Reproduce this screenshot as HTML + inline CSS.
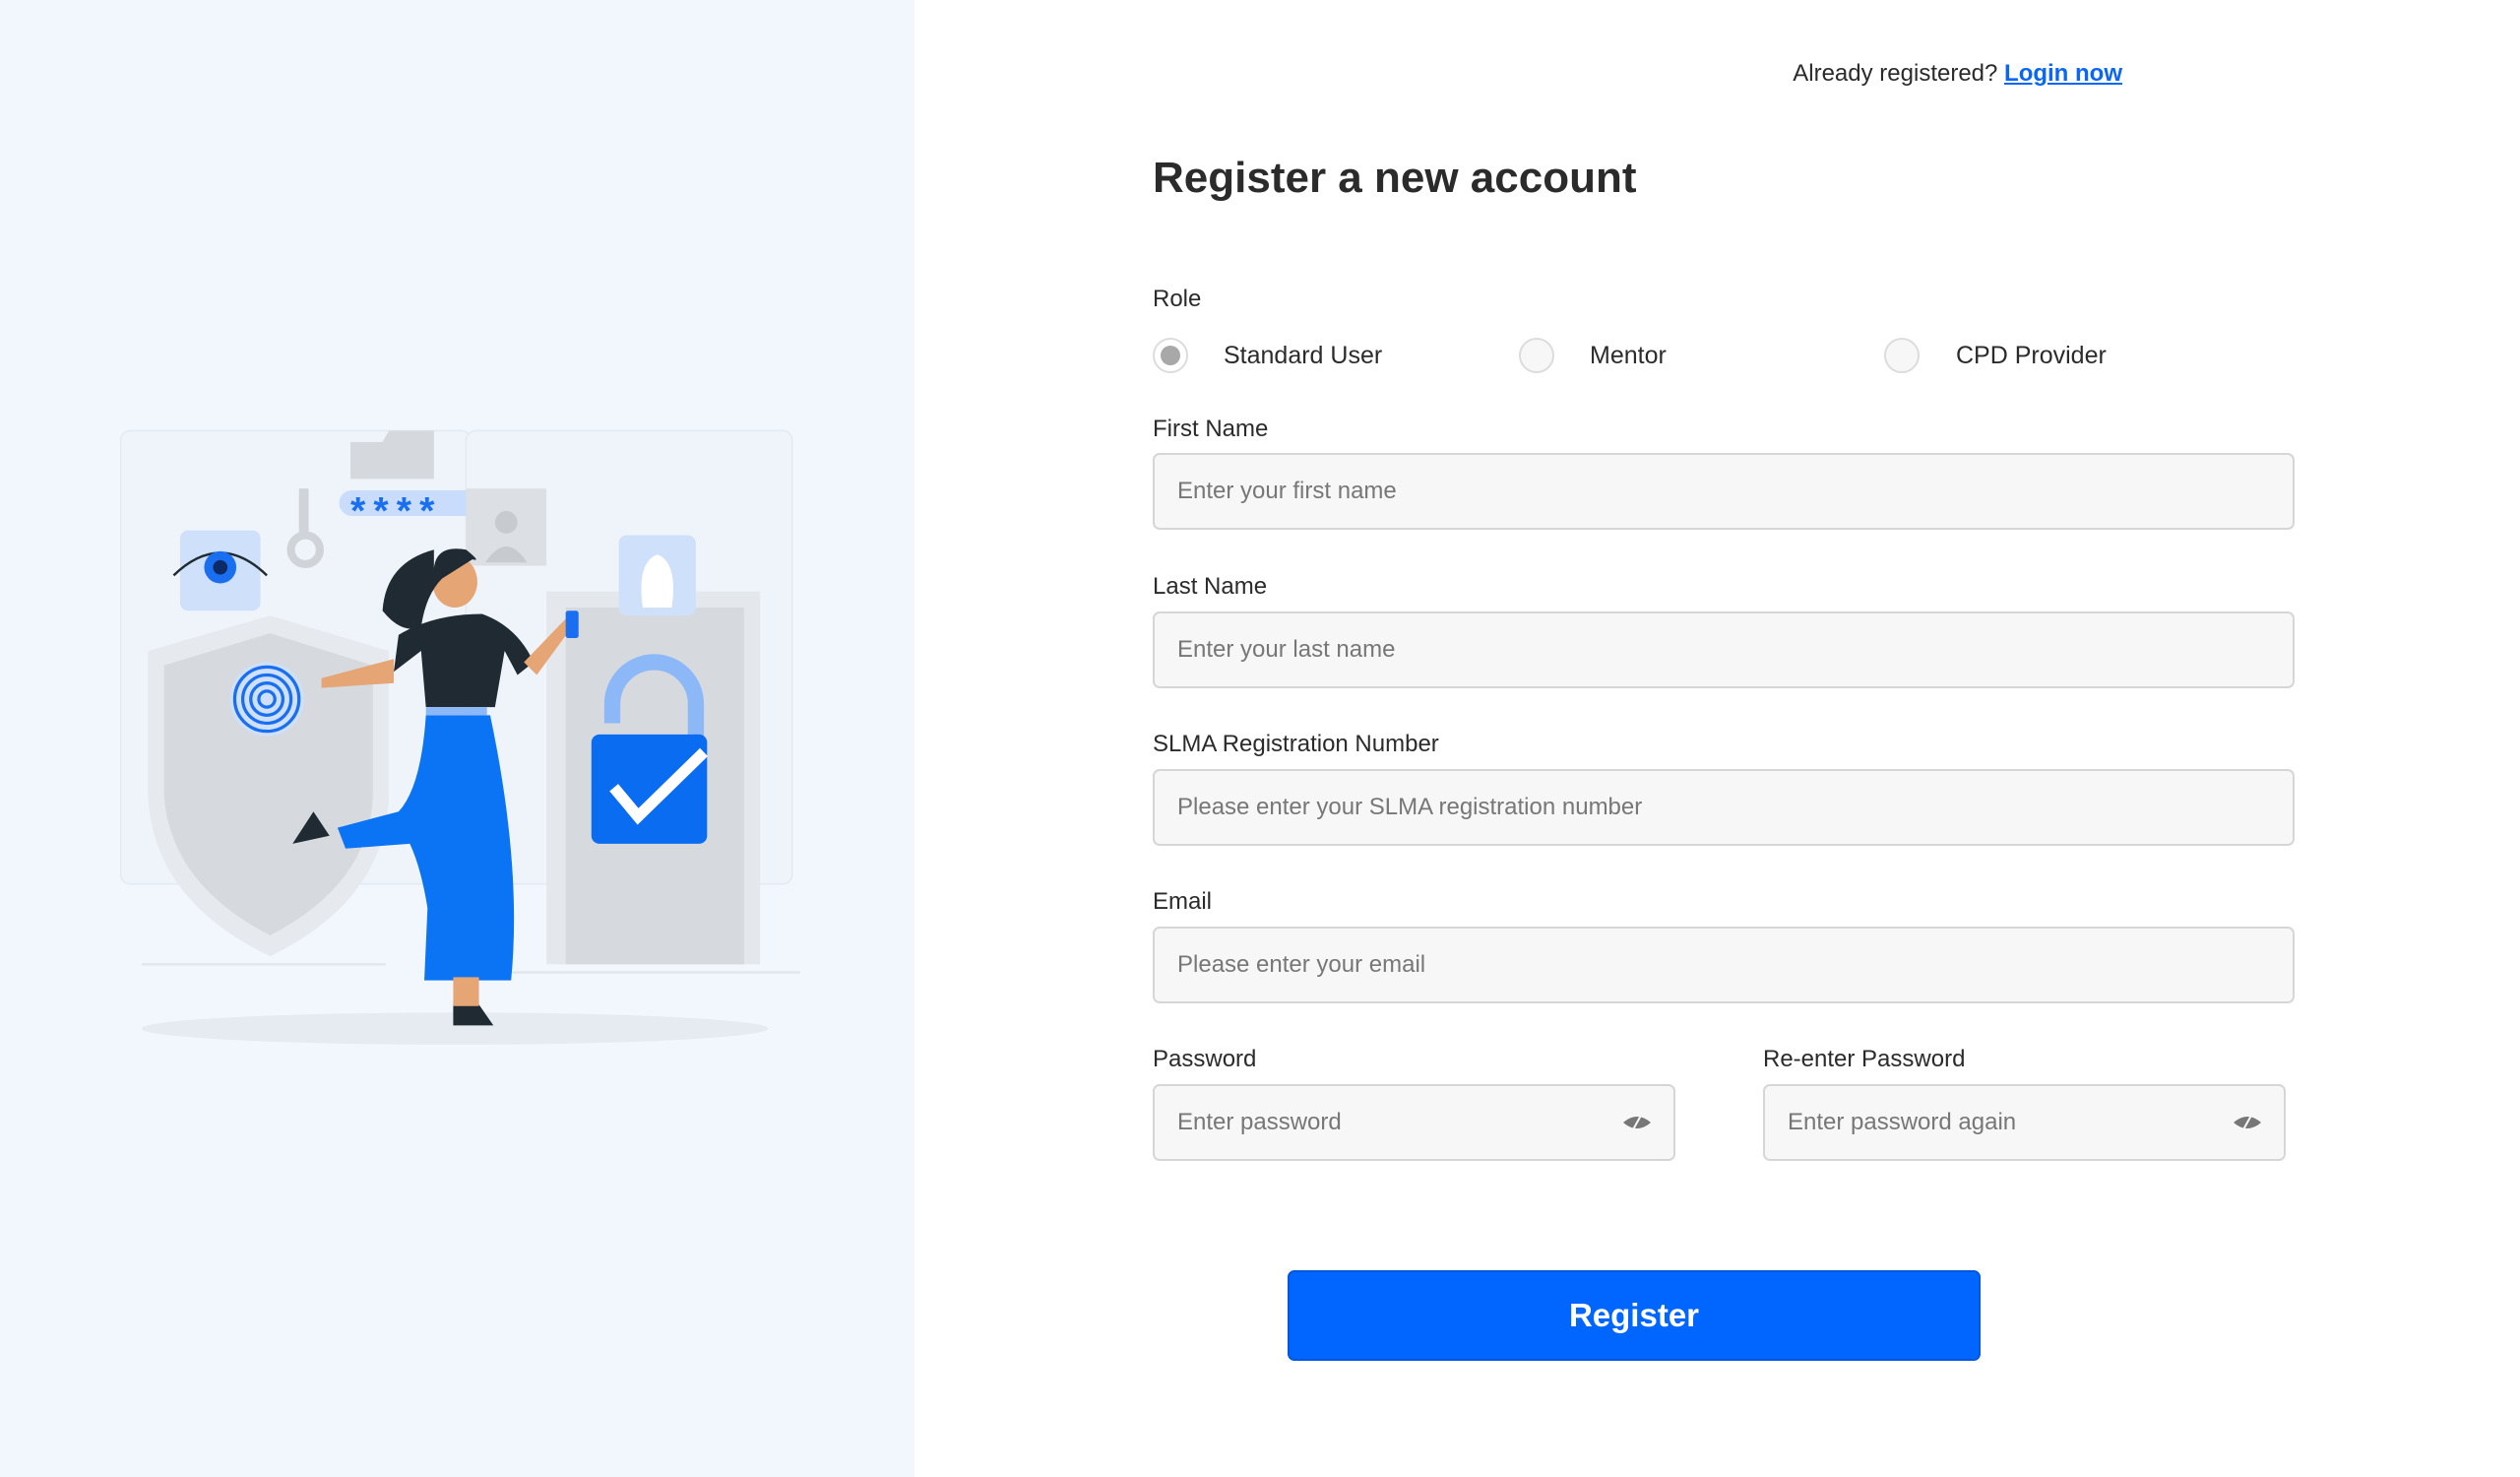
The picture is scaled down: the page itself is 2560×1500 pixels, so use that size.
<!DOCTYPE html>
<html><head><meta charset="utf-8"><style>
*{box-sizing:border-box;margin:0;padding:0}
body{width:2560px;height:1500px;background:#fff;font-family:"Liberation Sans",sans-serif;color:#2b2b2b;position:relative;overflow:hidden}
.left{position:absolute;left:0;top:0;width:929px;height:1500px;background:#f2f7fe}
.left svg{position:absolute;left:0;top:0}
.abs{position:absolute;white-space:nowrap}
.lbl{position:absolute;left:1171px;font-size:24px;color:#2b2b2b;line-height:24px}
.inp{position:absolute;left:1171px;width:1160px;height:78px;background:#f7f7f7;border:2px solid #d6d6d6;border-radius:7px;font-size:24px;color:#777;padding-left:23px;line-height:74px}
.radio{position:absolute;width:36px;height:36px;border-radius:50%;border:2px solid #dcdcdc;background:#f7f7f7}
.rl{position:absolute;font-size:25px;line-height:25px;color:#2b2b2b}
.eye{position:absolute;right:22px;top:28px}
</style></head><body>
<div class="left">
<svg width="929" height="1500" viewBox="0 0 569 919">
<rect x="75" y="268" width="218" height="282" rx="6" fill="#eff4fb" stroke="#e4eaf2"/>
<rect x="290" y="268" width="203" height="282" rx="6" fill="#eff4fb" stroke="#e4eaf2"/>
<line x1="88" y1="600" x2="240" y2="600" stroke="#e2e7ee" stroke-width="1.5"/>
<line x1="300" y1="605" x2="498" y2="605" stroke="#e2e7ee" stroke-width="1.5"/>
<path d="M168 383 L92 405 L92 495 Q95 560 168 595 Q240 560 242 495 L242 405 Z" fill="#e6eaef"/>
<path d="M168 394 L102 414 L102 495 Q106 550 168 582 Q230 550 232 495 L232 414 Z" fill="#d6dadf"/>
<circle cx="166" cy="435" r="23" fill="#cfe0fb"/>
<g fill="none" stroke="#1a6ff0" stroke-width="2">
<circle cx="166" cy="435" r="20"/><circle cx="166" cy="435" r="15"/><circle cx="166" cy="435" r="10"/><circle cx="166" cy="435" r="5"/></g>
<rect x="340" y="368" width="133" height="232" fill="#e4e8ed"/>
<rect x="352" y="378" width="111" height="222" fill="#d6dadf"/>
<path d="M381 450 L381 438 A26 26 0 0 1 433 438 L433 460" fill="none" stroke="#8db8f8" stroke-width="10"/>
<rect x="368" y="457" width="72" height="68" rx="5" fill="#0a6cf0"/>
<path d="M382 490 L397 508 L438 468" fill="none" stroke="#fff" stroke-width="7"/>
<rect x="385" y="333" width="48" height="50" rx="5" fill="#cfe0fb"/>
<path d="M400 378 Q396 350 409 345 Q422 350 418 378 Z" fill="#fff"/>
<rect x="112" y="330" width="50" height="50" rx="5" fill="#cfe0fb"/>
<path d="M108 358 Q137 330 166 358" fill="none" stroke="#1f2a33" stroke-width="1.5"/>
<circle cx="137" cy="353" r="10" fill="#1a6ff0"/><circle cx="137" cy="353" r="4.5" fill="#0b2a66"/>
<rect x="211" y="305" width="100" height="16" rx="8" fill="#c9dcfb"/>
<text x="218" y="326" font-size="24" font-weight="bold" fill="#1a6ff0" font-family="Liberation Sans" letter-spacing="5">****</text>
<path d="M218 275 L238 275 L242 268 L270 268 L270 298 L218 298 Z" fill="#d5d9de"/>
<circle cx="190" cy="342" r="9" fill="none" stroke="#d0d4d9" stroke-width="5"/>
<rect x="186" y="304" width="6" height="30" fill="#d0d4d9"/>
<rect x="290" y="304" width="50" height="48" fill="#dcdfe3"/>
<circle cx="315" cy="325" r="7" fill="#c7cbd0"/><path d="M302 350 Q315 330 328 350 Z" fill="#c7cbd0"/>
<ellipse cx="283" cy="640" rx="195" ry="10" fill="#e6ebf2"/>
<path d="M264 610 L266 565 Q262 540 255 525 L215 528 L210 515 L248 505 Q262 490 265 445 L305 445 Q325 540 318 610 Z" fill="#0a74f5"/>
<path d="M195 505 L182 525 L205 520 Z" fill="#1f2a33"/>
<path d="M282 625 L282 638 L307 638 Q300 628 298 625 Z" fill="#1f2a33"/>
<rect x="282" y="608" width="16" height="18" fill="#e6a574"/>
<path d="M248 395 Q270 382 300 382 Q322 390 332 412 L322 420 L314 405 L308 440 L265 440 L262 405 L245 418 Z" fill="#1f2a33"/>
<path d="M245 410 L200 422 L200 428 L245 425 Z" fill="#e6a574"/>
<path d="M326 412 L352 385 L356 390 L334 420 Z" fill="#e6a574"/>
<rect x="352" y="380" width="8" height="17" rx="1.5" fill="#1a6ff0"/>
<ellipse cx="283" cy="362" rx="14" ry="16" fill="#e6a574"/>
<path d="M270 360 Q268 338 290 342 Q300 350 294 348 L275 360 Q265 370 262 390 Q250 395 238 380 Q240 350 270 342 Z" fill="#1f2a33"/>
<rect x="265" y="440" width="38" height="5" fill="#8db8f8"/>
</svg>
</div>

<div class="abs" style="right:404px;top:63px;font-size:24px;line-height:24px;color:#2b2b2b">Already registered? <span style="color:#0a66f5;text-decoration:underline;font-weight:bold">Login now</span></div>
<div class="abs" style="left:1171px;top:156px;font-size:44px;line-height:50px;font-weight:bold;color:#2b2b2b">Register a new account</div>

<div class="lbl" style="top:292px">Role</div>
<div class="radio" style="left:1171px;top:343px;background:#fff"><div style="position:absolute;left:6px;top:6px;width:20px;height:20px;border-radius:50%;background:#a8a8a8"></div></div>
<div class="rl" style="left:1243px;top:349px">Standard User</div>
<div class="radio" style="left:1543px;top:343px"></div>
<div class="rl" style="left:1615px;top:349px">Mentor</div>
<div class="radio" style="left:1914px;top:343px"></div>
<div class="rl" style="left:1987px;top:349px">CPD Provider</div>

<div class="lbl" style="top:424px">First Name</div>
<div class="inp" style="top:460px">Enter your first name</div>
<div class="lbl" style="top:584px">Last Name</div>
<div class="inp" style="top:621px">Enter your last name</div>
<div class="lbl" style="top:744px">SLMA Registration Number</div>
<div class="inp" style="top:781px">Please enter your SLMA registration number</div>
<div class="lbl" style="top:904px">Email</div>
<div class="inp" style="top:941px">Please enter your email</div>

<div class="lbl" style="top:1064px">Password</div>
<div class="inp" style="top:1101px;width:531px">Enter password
<svg class="eye" width="30" height="18" viewBox="0 0 30 18"><path d="M1 9 Q15 -3 29 9 Q15 21 1 9 Z" fill="#777"/><line x1="20" y1="0" x2="10" y2="18" stroke="#f7f7f7" stroke-width="2"/></svg></div>
<div class="lbl" style="top:1064px;left:1791px">Re-enter Password</div>
<div class="inp" style="top:1101px;left:1791px;width:531px">Enter password again
<svg class="eye" width="30" height="18" viewBox="0 0 30 18"><path d="M1 9 Q15 -3 29 9 Q15 21 1 9 Z" fill="#777"/><line x1="20" y1="0" x2="10" y2="18" stroke="#f7f7f7" stroke-width="2"/></svg></div>

<div class="abs" style="left:1308px;top:1290px;width:704px;height:92px;background:#0066ff;border:2px solid #0058dd;border-radius:7px;color:#fff;font-size:33px;font-weight:bold;text-align:center;line-height:88px">Register</div>
</body></html>
